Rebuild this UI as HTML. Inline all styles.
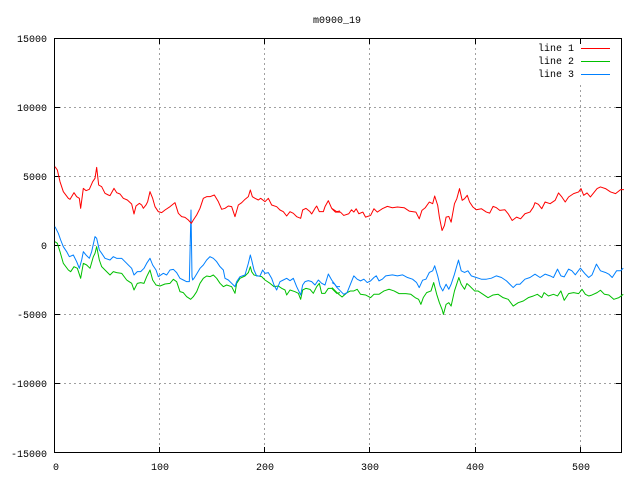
<!DOCTYPE html>
<html><head><meta charset="utf-8"><style>
html,body{margin:0;padding:0;background:#fff;width:640px;height:480px;overflow:hidden}
svg text{font-family:"Liberation Mono","DejaVu Sans Mono",monospace;font-size:10px;fill:#000}
</style></head><body>
<svg width="640" height="480" viewBox="0 0 640 480" xmlns="http://www.w3.org/2000/svg">
<rect width="640" height="480" fill="#fff"/>
<g stroke="#a0a0a0" stroke-width="1" stroke-dasharray="2,3" fill="none" shape-rendering="crispEdges">
<line x1="159.5" y1="38" x2="159.5" y2="453"/>
<line x1="264.5" y1="38" x2="264.5" y2="453"/>
<line x1="369.5" y1="38" x2="369.5" y2="453"/>
<line x1="475.5" y1="38" x2="475.5" y2="453"/>
<line x1="580.5" y1="85" x2="580.5" y2="453"/>
<line x1="54" y1="107.5" x2="622" y2="107.5"/>
<line x1="54" y1="176.5" x2="622" y2="176.5"/>
<line x1="54" y1="245.5" x2="622" y2="245.5"/>
<line x1="54" y1="314.5" x2="622" y2="314.5"/>
<line x1="54" y1="383.5" x2="622" y2="383.5"/>
</g>
<g stroke="#000" stroke-width="1" fill="none" shape-rendering="crispEdges">
<rect x="54.5" y="38.5" width="567" height="414"/>
<path d="M54 107.5h6M54 176.5h6M54 245.5h6M54 314.5h6M54 383.5h6M622 107.5h-6M622 176.5h-6M622 245.5h-6M622 314.5h-6M622 383.5h-6M159.5 453v-6M264.5 453v-6M369.5 453v-6M475.5 453v-6M580.5 453v-6M159.5 38v6M264.5 38v6M369.5 38v6M475.5 38v6M580.5 38v6"/>
</g>
<g text-anchor="end">
<text x="47" y="42">15000</text>
<text x="47" y="111">10000</text>
<text x="47" y="180">5000</text>
<text x="47" y="249">0</text>
<text x="47" y="318">-5000</text>
<text x="47" y="387">-10000</text>
<text x="47" y="457">-15000</text>
</g>
<g text-anchor="middle">
<text x="56" y="470">0</text>
<text x="160" y="470">100</text>
<text x="265" y="470">200</text>
<text x="370" y="470">300</text>
<text x="475" y="470">400</text>
<text x="581" y="470">500</text>
<text x="337" y="23">m0900_19</text>
</g>
<g text-anchor="end">
<text x="574" y="51">line 1</text>
<text x="574" y="64">line 2</text>
<text x="574" y="77">line 3</text>
</g>
<path d="M581 48.5h29" stroke="#ff0000"/>
<path d="M581 61.5h29" stroke="#00c000"/>
<path d="M581 74.5h29" stroke="#0080ff"/>
<g fill="none" stroke-width="1" stroke-linejoin="round">
<g transform="translate(50 150) scale(0.33333)">
<polyline vector-effect="non-scaling-stroke" stroke="#00c000" points="15,275 22,280 30,305 40,340 55,360 62,365 72,350 82,355 92,385 100,340 110,345 120,355 130,320 135,310 140,290 148,330 155,350 165,360 180,375 190,365 200,368 215,370 230,390 245,400 252,420 262,400 272,398 282,400 290,380 300,360 308,390 318,405 330,408 345,402 360,400 370,388 380,395 390,425 400,428 410,440 422,448 430,440 440,425 450,400 460,385 470,378 480,380 490,375 500,385 510,400 520,410 530,405 545,410 555,430 560,400 570,385 585,378 595,368 601,350 605,365 612,375 625,378 635,380 645,390 660,400 672,410 685,408 695,415 705,420 710,435 720,420 735,425 745,430 752,448 758,420 768,415 780,418 790,430 800,410 808,400 815,430 825,430 835,415 845,415 860,430 870,428"/>
<polyline vector-effect="non-scaling-stroke" stroke="#0080ff" points="15,230 25,250 32,270 40,290 50,305 58,320 70,315 80,335 88,355 95,330 100,305 108,315 118,325 125,305 135,260 140,265 148,300 155,310 165,325 180,330 190,320 200,325 215,325 230,340 245,355 252,375 262,365 272,365 282,355 290,340 300,325 308,345 318,360 325,380 340,370 350,375 360,360 370,358 380,368 390,385 400,390 410,395 418,395 423,180 426,380 428,390 432,385 440,372 450,355 460,345 470,330 480,320 490,325 500,335 510,350 520,360 525,385 535,390 545,400 555,410 560,395 570,380 585,375 595,340 601,315 605,330 612,360 620,378 630,378 638,360 645,370 655,368 665,385 672,405 680,420 690,395 700,390 710,385 720,392 730,385 740,410 752,435 758,405 765,395 775,392 785,395 795,405 805,390 815,400 825,405 835,372 845,390 860,410 870,410"/>
<polyline vector-effect="non-scaling-stroke" stroke="#ff0000" points="15,50 22,60 30,95 40,125 55,145 60,148 72,128 80,140 88,145 92,175 100,115 108,122 118,118 128,95 135,85 140,52 146,105 155,110 165,130 175,135 180,137 192,115 200,128 210,132 220,145 232,150 245,162 252,192 258,168 268,160 275,165 280,175 288,165 293,155 300,125 308,145 315,170 325,185 335,188 345,180 360,170 375,158 385,190 395,200 405,202 415,210 424,220 430,210 440,195 450,175 460,145 470,140 480,140 493,135 505,155 515,178 525,175 535,168 545,170 555,200 565,165 575,158 585,148 595,140 601,120 607,140 615,145 625,150 632,145 645,155 655,145 665,165 680,170 690,180 700,185 710,198 720,185 730,190 740,200 752,205 758,180 768,175 780,185 785,192 795,175 800,168 808,185 820,185 825,170 835,152 845,175 860,185 870,183"/>
</g>
<g transform="translate(332 150) scale(0.33557)">
<polyline vector-effect="non-scaling-stroke" stroke="#00c000" points="0,410 10,420 20,430 30,438 45,425 55,420 65,420 75,415 85,430 100,432 115,440 125,430 140,430 155,420 170,415 185,420 200,428 220,428 235,430 248,440 258,445 265,460 272,440 282,425 295,420 303,395 312,430 320,455 328,475 332,490 340,460 348,455 355,465 365,420 378,380 385,400 395,415 402,398 410,405 425,420 435,420 450,430 465,440 480,432 495,430 510,440 525,445 540,465 555,455 570,450 585,440 600,435 612,430 625,440 632,425 645,435 660,430 672,435 682,420 692,448 705,428 720,425 735,428 745,415 755,430 765,435 775,432 790,425 800,418 812,430 825,432 840,445 855,440 868,430"/>
<polyline vector-effect="non-scaling-stroke" stroke="#0080ff" points="0,395 8,400 15,410 25,420 35,430 45,425 55,400 65,375 75,385 85,390 95,385 105,395 115,390 125,380 132,375 140,390 150,385 160,375 180,372 195,375 210,372 225,380 240,385 252,395 260,410 270,388 280,385 290,365 300,360 306,345 315,375 322,405 330,420 340,400 348,415 355,400 365,370 372,345 377,328 385,360 395,365 405,360 415,375 430,380 445,385 460,385 475,382 490,375 505,380 520,390 530,400 540,410 550,400 560,400 575,385 590,380 605,370 620,380 635,370 650,375 660,380 672,355 682,375 692,378 705,355 715,360 725,372 740,352 755,370 765,380 775,372 788,340 800,360 815,365 825,370 835,380 848,360 860,360 868,352"/>
<polyline vector-effect="non-scaling-stroke" stroke="#ff0000" points="0,175 10,185 25,185 35,195 50,190 58,178 65,185 72,175 80,190 92,185 100,200 115,195 125,175 135,185 150,175 165,168 180,172 195,170 215,172 230,182 250,185 260,205 268,180 278,172 290,155 300,160 306,137 315,165 320,200 328,240 335,225 340,200 348,198 355,215 365,160 372,145 380,115 388,150 395,145 403,135 410,155 420,170 430,178 445,175 460,185 470,188 480,168 490,172 500,180 515,178 525,190 537,210 550,200 562,205 575,190 590,185 600,170 605,157 615,162 625,175 635,155 650,160 665,150 675,128 685,140 695,155 705,140 720,130 735,125 742,115 750,135 760,128 770,140 790,115 800,110 815,115 830,125 845,130 860,118 870,118"/>
</g>
</g>
</svg>
</body></html>
